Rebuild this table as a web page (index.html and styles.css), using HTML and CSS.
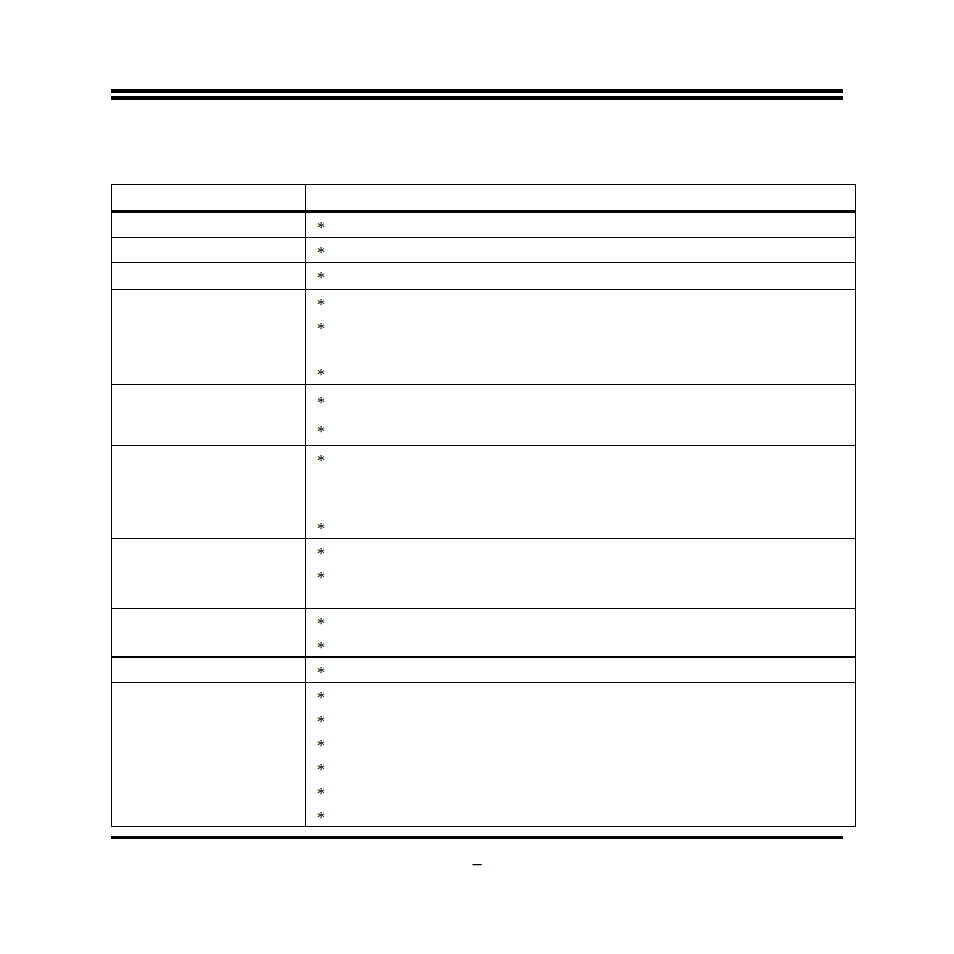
FILE: index.html
```html
<!DOCTYPE html>
<html>
<head>
<meta charset="utf-8">
<link rel="stylesheet" href="styles.css">
</head>
<body>
<div class="page">
  <div class="rule-top"></div>
  <div class="table">
    <div class="row head"><div class="cl"></div><div class="cr"></div></div>
    <div class="row thick r1"><div class="cl"></div><div class="cr"><div class="it"><span class="ast">*</span></div></div></div>
    <div class="row r2"><div class="cl"></div><div class="cr"><div class="it"><span class="ast">*</span></div></div></div>
    <div class="row r3"><div class="cl"></div><div class="cr"><div class="it"><span class="ast">*</span></div></div></div>
    <div class="row r4"><div class="cl"></div><div class="cr">
      <div class="it"><span class="ast">*</span></div>
      <div class="it"><span class="ast">*</span></div>
      <div class="it g22"><span class="ast">*</span></div>
    </div></div>
    <div class="row r5"><div class="cl"></div><div class="cr">
      <div class="it"><span class="ast">*</span></div>
      <div class="it g5"><span class="ast">*</span></div>
    </div></div>
    <div class="row r6"><div class="cl"></div><div class="cr">
      <div class="it"><span class="ast">*</span></div>
      <div class="it g44"><span class="ast">*</span></div>
    </div></div>
    <div class="row r7"><div class="cl"></div><div class="cr">
      <div class="it"><span class="ast">*</span></div>
      <div class="it"><span class="ast">*</span></div>
    </div></div>
    <div class="row r8"><div class="cl"></div><div class="cr">
      <div class="it"><span class="ast">*</span></div>
      <div class="it short"><span class="ast">*</span></div>
    </div></div>
    <div class="row thick2 r9"><div class="cl"></div><div class="cr"><div class="it"><span class="ast">*</span></div></div></div>
    <div class="row r10"><div class="cl"></div><div class="cr">
      <div class="it"><span class="ast">*</span></div>
      <div class="it"><span class="ast">*</span></div>
      <div class="it"><span class="ast">*</span></div>
      <div class="it"><span class="ast">*</span></div>
      <div class="it"><span class="ast">*</span></div>
      <div class="it short"><span class="ast">*</span></div>
    </div></div>
  </div>
  <div class="rule-bottom"></div>
</div>
<div class="pagenum">–</div>
</body>
</html>
```
FILE: styles.css
```css
html, body {
  margin: 0;
  padding: 0;
  background: #fff;
  font-family: "Liberation Serif", "Times New Roman", serif;
  color: #000;
}
.page {
  padding-top: 89px;
  padding-left: 111px;
}
.rule-top {
  width: 732px;
  height: 3px;
  border-top: 4px solid #000;
  border-bottom: 4px solid #000;
}
.table {
  margin-top: 84px;
  width: 743px;
  border: 1px solid #000;
}
.row {
  display: grid;
  grid-template-columns: 194px 1fr;
  border-top: 1px solid #000;
}
.row.head {
  border-top: none;
}
.row.thick {
  border-top: 3px solid #000;
}
.row.thick2 {
  border-top: 2px solid #000;
}
.cl {
  border-right: 1px solid #000;
}
.cr {
  padding-left: 11px;
}
.head .cl, .head .cr { height: 25px; }
.it {
  height: 24px;
  font-size: 16px;
  line-height: 24px;
  overflow: visible;
}
.it.short { height: 23px; }
.ast {
  position: relative;
  top: 3px;
}
.g22 { margin-top: 22px; }
.g5 { margin-top: 5px; }
.g44 { margin-top: 44px; }
.r3 .cr { padding-bottom: 2px; }
.r5 .cr { padding-top: 3px; padding-bottom: 4px; }
.r7 .cr { padding-bottom: 21px; }
.rule-bottom {
  margin-top: 9px;
  width: 732px;
  height: 3px;
  background: #000;
}
.pagenum {
  text-align: center;
  font-weight: bold;
  font-size: 18px;
  line-height: 20px;
  margin-top: 14px;
}
```
